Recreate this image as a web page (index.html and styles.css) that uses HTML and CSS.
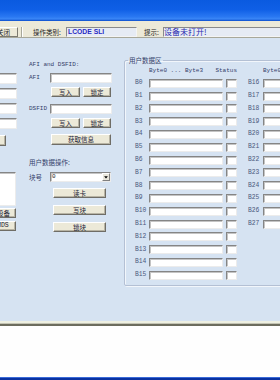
FILE: index.html
```html
<!DOCTYPE html>
<html>
<head>
<meta charset="utf-8">
<link rel="stylesheet" href="styles.css">
</head>
<body>
<div class="window">
  <div class="titlebar"></div>
  <div class="toolbar">
    <div class="tbtn">关闭</div>
    <div class="tsep"></div>
    <span class="tlabel op">操作类别:</span>
    <div class="tfield type">LCODE SLI</div>
    <span class="tlabel tip">提示:</span>
    <div class="tfield hint">设备未打开!</div>
  </div>
  <div class="main">
    <div class="col-left">
      <div class="inp lin"></div>
      <div class="inp lin"></div>
      <div class="inp lin"></div>
      <div class="inp lin"></div>
      <div class="btn lbtn1">设置</div>
      <div class="inp ltext"></div>
      <div class="btn lbtn2">关闭设备</div>
      <div class="btn lbtn3">ISO15693 CMDS</div>
    </div>
    <div class="col-mid">
      <div class="sect">AFI and DSFID:</div>
      <div class="frow r-afi"><span class="flabel">AFI</span><div class="inp fin"></div></div>
      <div class="brow"><div class="btn b1">写入</div><div class="btn b2">锁定</div></div>
      <div class="frow r-dsfid"><span class="flabel">DSFID</span><div class="inp fin"></div></div>
      <div class="brow"><div class="btn b1">写入</div><div class="btn b2">锁定</div></div>
      <div class="btn bwide">获取信息</div>
      <div class="sect cn s2">用户数据操作:</div>
      <div class="frow r-blk"><span class="flabel cn">块号</span>
        <div class="inp sel"><span class="selv">0</span><span class="arrow"><svg width="7" height="8" viewBox="0 0 7 8"><path d="M1 3h5L3.5 6z" fill="#000"/></svg></span></div>
      </div>
      <div class="btn bop first">读卡</div>
      <div class="btn bop">写块</div>
      <div class="btn bop">锁块</div>
    </div>
    <fieldset class="data">
      <legend>用户数据区</legend>
      <div class="groups">
        <div class="grp g1">
          <div class="hdr"><span class="h-bytes">Byte0 ... Byte3</span><span class="h-status">Status</span></div>
          <div class="drow"><span class="bl">B0</span><div class="inp bin"></div><div class="inp st"></div></div>
          <div class="drow"><span class="bl">B1</span><div class="inp bin"></div><div class="inp st"></div></div>
          <div class="drow"><span class="bl">B2</span><div class="inp bin"></div><div class="inp st"></div></div>
          <div class="drow"><span class="bl">B3</span><div class="inp bin"></div><div class="inp st"></div></div>
          <div class="drow"><span class="bl">B4</span><div class="inp bin"></div><div class="inp st"></div></div>
          <div class="drow"><span class="bl">B5</span><div class="inp bin"></div><div class="inp st"></div></div>
          <div class="drow"><span class="bl">B6</span><div class="inp bin"></div><div class="inp st"></div></div>
          <div class="drow"><span class="bl">B7</span><div class="inp bin"></div><div class="inp st"></div></div>
          <div class="drow"><span class="bl">B8</span><div class="inp bin"></div><div class="inp st"></div></div>
          <div class="drow"><span class="bl">B9</span><div class="inp bin"></div><div class="inp st"></div></div>
          <div class="drow"><span class="bl">B10</span><div class="inp bin"></div><div class="inp st"></div></div>
          <div class="drow"><span class="bl">B11</span><div class="inp bin"></div><div class="inp st"></div></div>
          <div class="drow"><span class="bl">B12</span><div class="inp bin"></div><div class="inp st"></div></div>
          <div class="drow"><span class="bl">B13</span><div class="inp bin"></div><div class="inp st"></div></div>
          <div class="drow"><span class="bl">B14</span><div class="inp bin"></div><div class="inp st"></div></div>
          <div class="drow"><span class="bl">B15</span><div class="inp bin"></div><div class="inp st"></div></div>
        </div>
        <div class="grp g2">
          <div class="hdr"><span class="h-bytes">Byte0 ... Byte3</span></div>
          <div class="drow"><span class="bl">B16</span><div class="inp bin"></div></div>
          <div class="drow"><span class="bl">B17</span><div class="inp bin"></div></div>
          <div class="drow"><span class="bl">B18</span><div class="inp bin"></div></div>
          <div class="drow"><span class="bl">B19</span><div class="inp bin"></div></div>
          <div class="drow"><span class="bl">B20</span><div class="inp bin"></div></div>
          <div class="drow"><span class="bl">B21</span><div class="inp bin"></div></div>
          <div class="drow"><span class="bl">B22</span><div class="inp bin"></div></div>
          <div class="drow"><span class="bl">B23</span><div class="inp bin"></div></div>
          <div class="drow"><span class="bl">B24</span><div class="inp bin"></div></div>
          <div class="drow"><span class="bl">B25</span><div class="inp bin"></div></div>
          <div class="drow"><span class="bl">B26</span><div class="inp bin"></div></div>
          <div class="drow"><span class="bl">B27</span><div class="inp bin"></div></div>
        </div>
      </div>
    </fieldset>
  </div>
  <div class="sep"></div>
  <div class="statusarea"></div>
  <div class="taskbar"></div>
</div>
</body>
</html>
```
FILE: styles.css
```css
html, body {
  margin: 0;
  padding: 0;
  width: 280px;
  height: 380px;
  overflow: hidden;
  background: #fff;
}
.window {
  width: 280px;
  height: 380px;
  overflow: hidden;
  display: flex;
  flex-direction: column;
  font-family: "Noto Sans CJK SC", "Liberation Sans", sans-serif;
}
.titlebar {
  height: 21px;
  flex-shrink: 0;
  background: linear-gradient(to bottom, #0a5ae0 0%, #0f5fe6 45%, #2a78f2 80%, #3a86f6 90%, #0a4ccc 100%);
}
.toolbar {
  flex-shrink: 0;
  background: #ece9d8;
  border-bottom: 1px solid #a8a89a;
  display: flex;
  align-items: flex-start;
  padding-top: 6px;
  box-sizing: content-box;
  height: 10px;
}
.toolbar > * { flex-shrink: 0; }
.tbtn {
  width: 30px;
  height: 10px;
  margin-left: -12px;
  box-sizing: border-box;
  background: #ece9d8;
  border: 1px solid;
  border-color: #fff #7c7a70 #7c7a70 #fff;
  font-size: 6.5px;
  line-height: 8px;
  text-align: right;
  padding-right: 7px;
  color: #222;
  overflow: hidden;
  white-space: nowrap;
}
.tsep {
  width: 1px;
  height: 10px;
  margin-left: 3px;
  background: #a8a89a;
  border-right: 1px solid #fff;
}
.tlabel {
  font-size: 6.5px;
  line-height: 10px;
  color: #222;
  white-space: nowrap;
}
.tlabel.op { margin-left: 10px; width: 33px; }
.tlabel.tip { margin-left: 7px; width: 19px; }
.tfield {
  height: 10px;
  box-sizing: border-box;
  background: #e6ebf4;
  border: 1px solid;
  border-color: #8a8a8a #f4f4f4 #f4f4f4 #8a8a8a;
  overflow: hidden;
  white-space: nowrap;
}
.tfield.type {
  width: 71px;
  font-family: "Liberation Sans", sans-serif;
  font-weight: bold;
  font-size: 6.8px;
  line-height: 8px;
  color: #2a2ac4;
  padding-left: 1px;
}
.tfield.hint {
  flex: 1 0 auto;
  margin-right: -10px;
  font-size: 8px;
  line-height: 8px;
  color: #2a2ab0;
  padding-left: 0;
}

.main {
  height: 283px;
  flex-shrink: 0;
  background: #d6e3f2;
  display: flex;
  align-items: flex-start;
  overflow: hidden;
}
.inp {
  box-sizing: border-box;
  background: #fff;
  border: 1px solid;
  border-color: #858585 #ececec #ececec #858585;
  box-shadow: inset 1px 1px 0 #c4c4c4;
}
.btn {
  box-sizing: border-box;
  background: #ece9d8;
  border: 1px solid;
  border-color: #fff #6f6d66 #6f6d66 #fff;
  box-shadow: inset -1px -1px 0 #b8b4a4;
  font-size: 6.5px;
  line-height: 8px;
  color: #1c2438;
  text-align: center;
  white-space: nowrap;
  overflow: hidden;
}

.col-left {
  width: 60px;
  margin-left: -43px;
  flex-shrink: 0;
  padding-top: 35px;
  display: flex;
  flex-direction: column;
  align-items: flex-start;
}
.lin { width: 60px; height: 11px; margin-bottom: 4px; }
.lin:nth-child(4) { margin-bottom: 0; }
.lbtn1 { width: 49px; height: 11px; margin-top: 6px; }
.ltext { width: 59px; height: 34px; margin-top: 26px; }
.lbtn2, .lbtn3 {
  width: 59px;
  height: 10px;
  text-align: right;
  padding-right: 5px;
}
.lbtn2 { margin-top: 2px; }
.lbtn3 { margin-top: 3px; font-family: "Liberation Mono", monospace; padding-right: 10px; }

.col-mid {
  width: 83px;
  margin-left: 12px;
  flex-shrink: 0;
  padding-top: 23px;
  display: flex;
  flex-direction: column;
  align-items: flex-start;
}
.sect {
  height: 8px;
  line-height: 8px;
  font-family: "Liberation Mono", monospace;
  font-size: 6px;
  color: #34406a;
  white-space: nowrap;
}
.sect.cn { font-family: "Noto Sans CJK SC", sans-serif; font-size: 6.5px; }
.sect.s2 { margin-top: 13px; }
.frow {
  display: flex;
  align-items: center;
  height: 10px;
}
.flabel {
  width: 21px;
  font-family: "Liberation Mono", monospace;
  font-size: 6px;
  line-height: 8px;
  color: #34406a;
  white-space: nowrap;
}
.flabel.cn { font-family: "Noto Sans CJK SC", sans-serif; font-size: 6.5px; }
.fin { width: 62px; height: 10px; }
.r-afi { margin-top: 4px; }
.r-dsfid { margin-top: 7px; }
.r-blk { margin-top: 6px; }
.brow {
  display: flex;
  margin-top: 4px;
  margin-left: 22px;
  gap: 3px;
}
.brow .btn { height: 10px; }
.b1 { width: 29px; }
.b2 { width: 28px; }
.bwide { width: 60px; height: 11px; margin-top: 6px; margin-left: 22px; line-height: 9px; }
.sel {
  width: 61px;
  height: 10px;
  display: flex;
  align-items: center;
  justify-content: space-between;
}
.selv {
  font-family: "Liberation Mono", monospace;
  font-size: 6px;
  line-height: 8px;
  padding-left: 1px;
  color: #222;
}
.arrow {
  width: 8px;
  height: 8px;
  box-sizing: border-box;
  background: #e8e6dc;
  border: 1px solid;
  border-color: #fff #808080 #808080 #fff;
  display: flex;
  align-items: center;
  justify-content: center;
}
.arrow svg { width: 6px; height: 6px; }
.bop { width: 53px; height: 10px; margin-left: 24px; margin-top: 7px; }
.bop.first { margin-top: 6px; }

.data {
  margin: 18px 0 0 12px;
  padding: 3px 0 5px 0;
  width: 200px;
  flex-shrink: 0;
  border: 1px solid #b4c0d4;
  border-radius: 2px;
  box-shadow: 1px 1px 0 #f2f6fb, inset 1px 1px 0 #f2f6fb;
  min-width: 0;
}
.data legend {
  font-size: 6.5px;
  line-height: 8px;
  color: #34406a;
  padding: 0 1px;
  margin-left: 3px;
}
.groups { display: flex; align-items: flex-start; }
.grp { display: flex; flex-direction: column; gap: 3.8px; }
.g1 { margin-left: 10px; width: 102px; }
.g2 { margin-left: 11px; }
.hdr {
  height: 8px;
  line-height: 8px;
  font-family: "Liberation Mono", monospace;
  font-size: 6px;
  color: #34406a;
  white-space: nowrap;
  display: flex;
}
.g1 .hdr .h-bytes { margin-left: 14px; width: 71px; }
.g2 .hdr .h-bytes { margin-left: 15px; }
.drow {
  display: flex;
  align-items: center;
  height: 9px;
}
.bl {
  font-family: "Liberation Mono", monospace;
  font-size: 6.3px;
  line-height: 8px;
  color: #4a587c;
  white-space: nowrap;
}
.g1 .bl { width: 14px; }
.g2 .bl { width: 15px; }
.bin { width: 74px; height: 9px; }
.st { width: 11px; height: 9px; margin-left: 3px; }

.sep {
  height: 5px;
  flex-shrink: 0;
  background: linear-gradient(to bottom, #eef0e2 0px, #eef0e2 2px, #c4c4b4 2px, #c4c4b4 3px, #6c6c5e 3px, #6c6c5e 5px);
}
.statusarea {
  height: 51px;
  flex-shrink: 0;
  background: #fefefe;
}
.taskbar {
  height: 3px;
  flex-shrink: 0;
  background: linear-gradient(to bottom, #3a6ad8 0px, #3a6ad8 1px, #0a32a0 1px);
}
```
